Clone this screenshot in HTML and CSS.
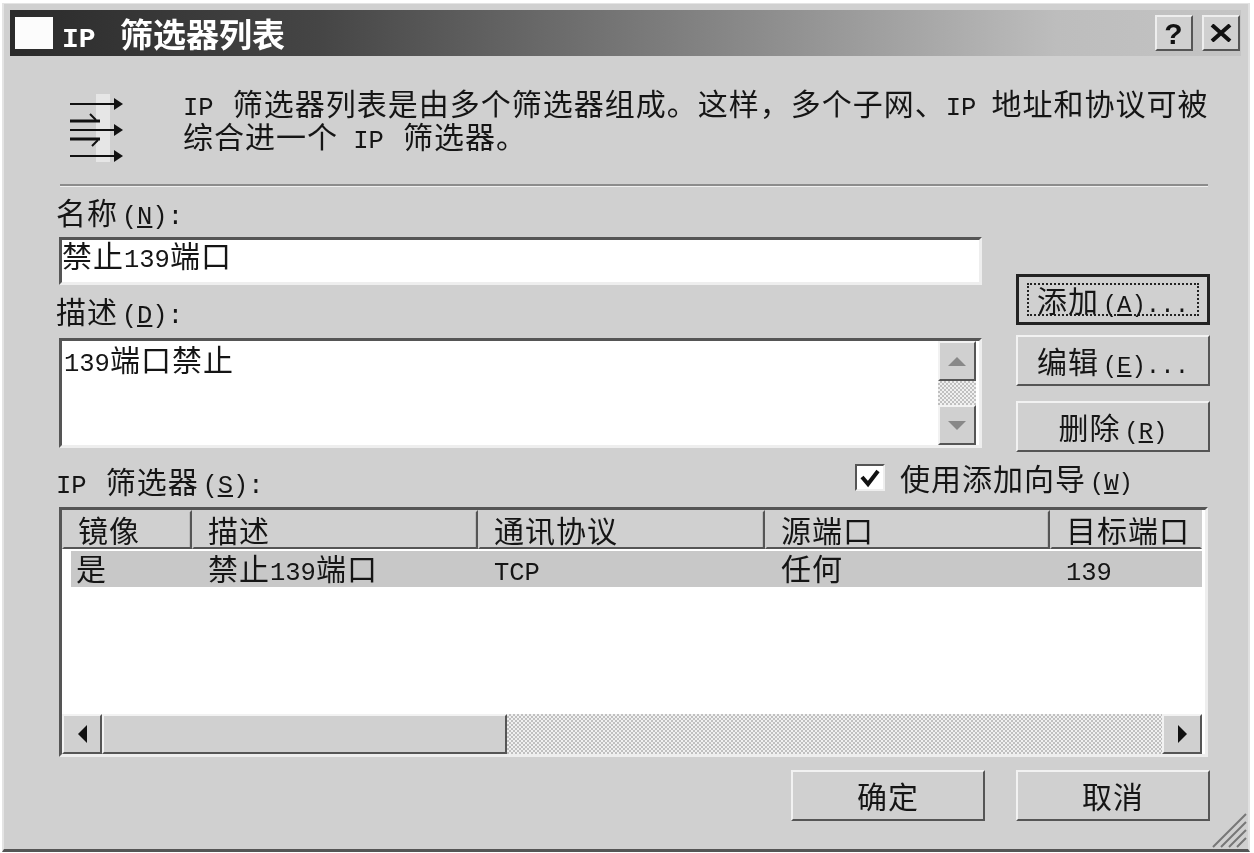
FILE: index.html
```html
<!DOCTYPE html>
<html lang="zh-CN">
<head>
    <meta charset="UTF-8">
    <title>IP 筛选器列表</title>
    <link rel="stylesheet" href="styles.css">
</head>
<body>
<div class="window">
    <!-- Title bar -->
    <div class="titlebar">
        <div class="title-icon"></div>
        <div class="title-text"><span class="lat">IP </span> 筛选器列表</div>
        <div class="title-btn">?</div>
        <div class="title-btn title-close">
            <svg width="22" height="18" viewBox="0 0 22 18"><path d="M2 1 L20 17 M20 1 L2 17" stroke="#111" stroke-width="4" fill="none"/></svg>
        </div>
    </div>

    <div class="content">
        <!-- Intro -->
        <div class="intro">
            <svg class="intro-icon" width="56" height="72" viewBox="0 0 56 72">
                <rect x="28" y="2" width="14" height="68" fill="#e6e6e6"/>
                <g stroke="#111" stroke-width="2" fill="none">
                    <path d="M2 12 H48 M2 38 H48 M2 64 H48"/>
                    <path d="M2 29 H32 M2 47 H32" stroke-width="3"/>
                    <path d="M22 22 L28 28 M24 54 L30 48"/>
                </g>
                <g fill="#111">
                    <path d="M46 6 L55 12 L46 18 Z"/>
                    <path d="M46 32 L55 38 L46 44 Z"/>
                    <path d="M46 58 L55 64 L46 70 Z"/>
                </g>
            </svg>
            <p class="intro-text"><span class="lat">IP </span> 筛选器列表是由多个筛选器组成。这样，多个子网、<span class="lat">IP </span>地址和协议可被<br>综合进一个<span class="lat"> IP </span> 筛选器。</p>
        </div>
        <div class="divider"></div>

        <!-- Name, description and action buttons -->
        <div class="form-top">
            <div class="form-left">
                <div class="field-label">名称 <span class="lat">(<u>N</u>):</span></div>
                <div class="sunken name-input">禁止<span class="lat">139</span>端口</div>
                <div class="field-label label-desc">描述 <span class="lat">(<u>D</u>):</span></div>
                <div class="sunken desc-input">
                    <div class="desc-text"><span class="lat">139</span>端口禁止</div>
                    <div class="vscroll">
                        <div class="btn-raised scroll-btn"><span class="arrow arrow-up"></span></div>
                        <div class="dither"></div>
                        <div class="btn-raised scroll-btn"><span class="arrow arrow-down"></span></div>
                    </div>
                </div>
            </div>
            <div class="form-right">
                <div class="btn-default"><div class="focus-box"><span>添加 <span class="lat">(<u>A</u>)...</span></span></div></div>
                <div class="btn-raised action"><span>编辑 <span class="lat">(<u>E</u>)...</span></span></div>
                <div class="btn-raised action action-last"><span>删除 <span class="lat">(<u>R</u>)</span></span></div>
            </div>
        </div>

        <!-- Filter list -->
        <div class="list-head">
            <div class="field-label"><span class="lat">IP </span> 筛选器 <span class="lat">(<u>S</u>):</span></div>
            <div class="wizard">
                <div class="checkbox">
                    <svg width="24" height="20" viewBox="0 0 24 20"><path d="M4 9 L10 16 L20 3" stroke="#111" stroke-width="4" fill="none"/></svg>
                </div>
                <span>使用添加向导 <span class="lat">(<u>W</u>)</span></span>
            </div>
        </div>
        <div class="sunken list">
            <div class="list-row list-header">
                <div class="col">镜像</div>
                <div class="col">描述</div>
                <div class="col">通讯协议</div>
                <div class="col">源端口</div>
                <div class="col col-last">目标端口</div>
            </div>
            <div class="list-row list-item">
                <div class="cell">是</div>
                <div class="cell">禁止<span class="lat">139</span>端口</div>
                <div class="cell"><span class="lat">TCP</span></div>
                <div class="cell">任何</div>
                <div class="cell"><span class="lat">139</span></div>
            </div>
            <div class="list-empty"></div>
            <div class="hscroll">
                <div class="btn-raised hscroll-btn"><span class="arrow arrow-left"></span></div>
                <div class="btn-raised hscroll-thumb"></div>
                <div class="dither"></div>
                <div class="btn-raised hscroll-btn"><span class="arrow arrow-right"></span></div>
            </div>
        </div>

        <!-- Dialog buttons -->
        <div class="footer">
            <div class="btn-raised action">确定</div>
            <div class="btn-raised action">取消</div>
        </div>
    </div>

    <svg class="grip" width="36" height="36" viewBox="0 0 36 36">
        <g stroke="#777" stroke-width="2">
            <path d="M2 35 L35 2 M10 35 L35 10 M18 35 L35 18 M26 35 L35 26"/>
        </g>
    </svg>
</div>
</body>
</html>
```

FILE: styles.css
```css
/* Basic reset */
* { box-sizing: border-box; }
body {
    margin: 0;
    padding: 3px 0 0 2px;
    background-color: #fff;
    color: #151515;
    font-family: "Noto Sans CJK SC", sans-serif;
    font-size: 30px;
    line-height: 33px;
    letter-spacing: 1px;
    word-spacing: -4px;
}
.lat {
    font-family: "Liberation Mono", monospace;
    font-size: 25.5px;
    line-height: 0;
    letter-spacing: 0;
    word-spacing: 0;
    white-space: pre;
}
u { text-underline-offset: 2px; }

.window {
    position: relative;
    width: 1248px;
    height: 849px;
    padding: 6px 0 0 6px;
    background-color: #d0d0d0;
    border-top: 1px solid #e4e4e4;
    border-left: 2px solid #e4e4e4;
    border-right: 2px solid #e0e0e0;
    border-bottom: 3px solid #555;
    filter: blur(0.5px);
}

/* Title bar */
.titlebar {
    display: flex;
    align-items: center;
    width: 1231px;
    height: 46px;
    padding: 0 1px 0 5px;
    background: linear-gradient(to right, #2b2b2b 0%, #454545 25%, #8a8a8a 60%, #bdbdbd 85%, #c4c4c4 100%);
    color: #fff;
}
.title-icon {
    width: 38px;
    height: 32px;
    background-color: #fcfcfc;
}
.title-text {
    flex: 1;
    margin-left: 9px;
    font-size: 33px;
    font-weight: 700;
    letter-spacing: 0;
    word-spacing: 0;
}
.title-text .lat { font-size: 28px; font-weight: 700; }
.title-btn {
    display: flex;
    align-items: center;
    justify-content: center;
    width: 38px;
    height: 36px;
    margin-left: 9px;
    background-color: #d0d0d0;
    border: 2px solid;
    border-color: #eee #555 #555 #eee;
    color: #111;
    font-family: "Liberation Sans", sans-serif;
    font-size: 30px;
    font-weight: 700;
}

.content {
    width: 1154px;
    margin-left: 46px;
}

/* Intro */
.intro {
    display: flex;
    height: 128px;
    padding-top: 30px;
}
.intro-icon {
    flex: none;
    margin: 6px 0 0 12px;
}
.intro-text {
    margin: 0 0 0 59px;
    white-space: nowrap;
}
.divider {
    height: 3px;
    margin-left: 4px;
    margin-right: 2px;
    background-color: #8c8c8c;
    border-bottom: 1px solid #f0f0f0;
}

/* Top form */
.form-top {
    display: flex;
    justify-content: space-between;
    height: 259px;
}
.form-left { width: 926px; }
.form-right {
    display: flex;
    flex-direction: column;
    width: 194px;
    padding-top: 87px;
}
.field-label {
    height: 33px;
    white-space: nowrap;
}
.form-left > .field-label:first-child { margin-top: 8px; }
.label-desc { margin-top: 9px; }

.sunken {
    background-color: #fff;
    border: 3px solid;
    border-color: #555 #eee #eee #555;
}
.name-input {
    height: 48px;
    margin: 9px 0 0 3px;
    line-height: 28px;
}
.desc-input {
    display: flex;
    height: 110px;
    margin: 11px 0 0 3px;
    padding-right: 3px;
}
.desc-text {
    flex: 1;
    padding: 1px 0 0 2px;
}
.vscroll {
    display: flex;
    flex-direction: column;
    width: 38px;
}
.scroll-btn {
    display: flex;
    flex: none;
    align-items: center;
    justify-content: center;
    height: 40px;
}
.dither {
    flex: 1;
    background: repeating-conic-gradient(#c0c0c0 0 25%, #f0f0f0 0 50%) 0 0 / 4px 4px;
}

/* Raised controls */
.btn-raised {
    background-color: #d0d0d0;
    border: 2px solid;
    border-color: #f2f2f2 #555 #555 #f2f2f2;
}
.action {
    display: flex;
    flex: none;
    align-items: center;
    justify-content: center;
    width: 194px;
    height: 51px;
    white-space: nowrap;
}
.action .lat, .focus-box .lat { font-size: 24px; }
.btn-default {
    flex: none;
    width: 194px;
    height: 51px;
    margin-bottom: 10px;
    padding: 6px 8px;
    background-color: #d0d0d0;
    border: 3px solid #222;
}
.focus-box {
    display: flex;
    align-items: center;
    justify-content: center;
    height: 100%;
    border: 2px dotted #222;
    white-space: nowrap;
}
.action-last { margin-top: 15px; }

.arrow {
    display: block;
    width: 0;
    height: 0;
    border: 9px solid transparent;
}
.arrow-up { margin-top: -9px; border-bottom-color: #888; }
.arrow-down { margin-top: 9px; border-top-color: #888; }
.arrow-left { margin-left: -9px; border-right-color: #111; }
.arrow-right { margin-left: 9px; border-left-color: #111; }

/* Filter list */
.list-head {
    display: flex;
    height: 61px;
    justify-content: space-between;
    padding-top: 18px;
}
.wizard {
    display: flex;
    align-items: flex-start;
    width: 355px;
    margin-top: -3px;
    white-space: nowrap;
}
.wizard .lat { font-size: 24px; }
.checkbox {
    display: flex;
    align-items: center;
    justify-content: center;
    width: 30px;
    height: 27px;
    margin: 3px 15px 0 0;
    background-color: #fff;
    border: 2px solid;
    border-color: #555 #eee #eee #555;
}
.list {
    display: flex;
    flex-direction: column;
    width: 1149px;
    height: 250px;
    margin-left: 3px;
    padding-right: 3px;
}
.list-row {
    display: grid;
    grid-template-columns: 130px 286px 287px 285px 1fr;
    flex: none;
}
.list-header { height: 39px; }
.col {
    padding: 1px 0 0 14px;
    background-color: #d0d0d0;
    border: 2px solid;
    border-color: #d0d0d0 #555 #555 #d0d0d0;
    box-shadow: inset -1px 0 0 #bbb;
    line-height: 32px;
    white-space: nowrap;
}
.col-last { border-right-color: #d0d0d0; box-shadow: none; }
.list-item {
    height: 36px;
    margin: 2px 0 0 9px;
    grid-template-columns: 121px 286px 287px 285px 1fr;
    background-color: #c8c8c8;
}
.cell {
    padding: 0 0 0 5px;
    white-space: nowrap;
}
.cell + .cell { padding-left: 16px; }
.list-empty { flex: 1; }
.hscroll {
    display: flex;
    height: 40px;
}
.hscroll-btn {
    display: flex;
    flex: none;
    align-items: center;
    justify-content: center;
    width: 40px;
}
.hscroll-thumb {
    flex: none;
    width: 405px;
}

/* Dialog buttons */
.footer {
    display: flex;
    justify-content: flex-end;
    gap: 31px;
    margin-top: 13px;
}
.grip {
    position: absolute;
    right: 1px;
    bottom: 1px;
}
```
